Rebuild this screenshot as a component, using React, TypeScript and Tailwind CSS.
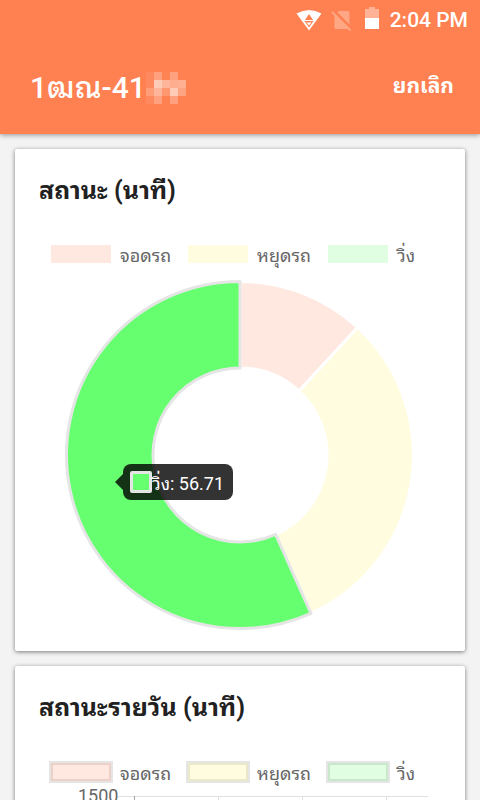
import React from "react";

const THAI = "font-['Roboto','Noto_Sans_Thai_Looped','Loma','Garuda','Waree','Noto_Sans',sans-serif]";

type Slice = { label: string; value: number; fill: string; active?: boolean };

const slices: Slice[] = [
  { label: "จอดรถ", value: 11.86, fill: "#ffe8e0" },
  { label: "หยุดรถ", value: 31.43, fill: "#fffce0" },
  { label: "วิ่ง", value: 56.71, fill: "#66ff70", active: true },
];

function ringPath(from: number, to: number, outer: number, inner: number) {
  const at = (share: number, r: number) => {
    const a = (share / 100) * Math.PI * 2;
    return `${(r * Math.sin(a)).toFixed(2)} ${(-r * Math.cos(a)).toFixed(2)}`;
  };
  const large = to - from > 50 ? 1 : 0;
  return `M${at(from, outer)}A${outer} ${outer} 0 ${large} 1 ${at(to, outer)}L${at(to, inner)}A${inner} ${inner} 0 ${large} 0 ${at(from, inner)}Z`;
}

function Donut() {
  let start = 0;
  return (
    <svg viewBox="-176 -176 352 352" className="block w-full" role="img" aria-label="สถานะ (นาที)">
      {slices.map((s) => {
        const from = start;
        start += s.value;
        return (
          <path
            key={s.label}
            d={ringPath(from, start, 173.5, 87)}
            fill={s.fill}
            stroke={s.active ? "#e5e5e5" : "#ffffff"}
            strokeWidth="3"
            strokeLinejoin="round"
          />
        );
      })}
    </svg>
  );
}

const plain = ["bg-[#ffe8e0]", "bg-[#fffce0]", "bg-[#e0ffe2]"];
const framed = [
  "bg-[#ffe8e0] border-[#edd1c9] outline-[#e5e5e5]",
  "bg-[#fffce0] border-[#ebe8c9] outline-[#e5e5e5]",
  "bg-[#e0ffe2] border-[#c9e8cb] outline-[#e5e5e5]",
];

function Legend({ bordered = false }: { bordered?: boolean }) {
  return (
    <ul className="ml-3 flex h-6 items-center gap-[17px] text-lg leading-6 text-[#666666]">
      {slices.map((s, i) => (
        <li key={s.label} className="flex items-center gap-[9px] whitespace-nowrap">
          <span
            className={
              bordered
                ? `h-[18px] w-[60px] border-2 outline-2 ${framed[i]}`
                : `h-[18px] w-[60px] ${plain[i]}`
            }
          />
          <span className="pt-[3px]">{s.label}</span>
        </li>
      ))}
    </ul>
  );
}

function StatusBar() {
  return (
    <div className="flex h-10 items-center justify-end pr-3 text-white">
      <svg viewBox="0 0 28 24" className="mr-2 h-6 w-7" fill="currentColor" aria-hidden="true">
        <path d="M1.500 5.500Q14-1.500 26.500 5.500L14 22.500Z" />
        <path d="M14 6l4 6h-8zM9.500 13h9L14 19.500z" fill="#ff8050" />
        <path d="M11.500 14.500h5L14 17.500z" />
      </svg>
      <svg viewBox="0 0 22 24" className="mr-3 h-6 w-[22px]" aria-hidden="true">
        <path d="M8 3h9q1.500 0 1.500 1.500v15q0 1.500-1.500 1.500H5q-1.500 0-1.500-1.500V7z" fill="#ffa685" />
        <path d="M2 2l19 19" stroke="#ff8050" strokeWidth="3" />
        <path d="M1 4l18.500 18.500" stroke="#ffa685" strokeWidth="2" />
      </svg>
      <svg viewBox="0 0 14 22" className="mr-[11px] mb-1 h-[22px] w-[14px]" aria-hidden="true">
        <path d="M0 2h4V0h6v2h4v9H0z" fill="#ffb296" />
        <path d="M0 11h14v11H0z" fill="#ffffff" />
      </svg>
      <span className="text-[21px] leading-6 font-medium">2:04 PM</span>
    </div>
  );
}

const mosaic = [
  "bg-[#ff895e]", "bg-[#ffa17e]", "bg-[#ff8454]", "bg-[#ffa17e]", "bg-[#ff8050]",
  "bg-[#ff895e]", "bg-[#ffcbb7]", "bg-[#ffb599]", "bg-[#ffad8f]", "bg-[#ffb093]",
  "bg-[#ff9d79]", "bg-[#ffb599]", "bg-[#ff9870]", "bg-[#ffcbb7]", "bg-[#ffa482]",
  "bg-[#ff895e]", "bg-[#ffa17e]", "bg-[#ff8050]", "bg-[#ffa17e]", "bg-[#ff8050]",
];

export default function App() {
  return (
    <div className={`flex h-screen flex-col overflow-hidden bg-[#f3f3f3] ${THAI}`}>
      <header className="z-10 shrink-0 bg-[#ff8050] pb-[22px] shadow-[0_1px_5px_rgba(0,0,0,0.4)]">
        <StatusBar />
        <div className="flex h-[72px] items-center justify-between pt-6 pr-[26px] pl-[30px] text-white">
          <div className="flex items-center">
            <h1 className="text-[30px] leading-10 font-medium">1ฒณ-41</h1>
            <div className="grid grid-cols-5" aria-hidden="true">
              {mosaic.map((c, i) => (
                <span key={i} className={`size-2 ${c}`} />
              ))}
            </div>
          </div>
          <button type="button" className="pb-1 text-[21px] leading-8 font-bold">
            ยกเลิก
          </button>
        </div>
      </header>
      <main className="flex flex-col gap-[15px] p-[15px]">
        <section className="shrink-0 rounded-xs bg-white px-6 pt-6 pb-5 shadow-[0_1px_4px_rgba(0,0,0,0.5)]">
          <h2 className="text-[25px] leading-9 font-bold text-[#212121]">สถานะ (นาที)</h2>
          <div className="pt-[33px]">
            <Legend />
          </div>
          <div className="relative mx-auto mt-[13px] w-[352px] max-w-full">
            <Donut />
            <div className="absolute top-[185px] left-[59px] flex h-9 items-center rounded-lg bg-black/80 pr-[9px] pl-[7px] text-lg leading-6 whitespace-nowrap text-white">
              <span className="absolute top-[10px] -left-2 border-y-8 border-r-8 border-y-transparent border-r-black/80" />
              <span className="size-[22px] rounded-[2px] border-3 border-[#e5e5e5] bg-[#66ff70]" />
              <span className="pt-[3px]">วิ่ง: 56.71</span>
            </div>
          </div>
        </section>
        <section className="shrink-0 rounded-xs bg-white px-6 pt-6 pb-6 shadow-[0_1px_4px_rgba(0,0,0,0.5)]">
          <h2 className="text-[25px] leading-9 font-bold text-[#212121]">สถานะรายวัน (นาที)</h2>
          <div className="pt-[34px]">
            <Legend bordered />
          </div>
          <div className="flex h-60 pr-[13px] pl-[39px] text-lg leading-6 text-[#666666]">
            <span>1500</span>
            <svg className="mt-3 h-48 w-[310px] min-w-0" aria-hidden="true">
              <path d="M0 .5H310M100.500 0V192M184.500 0V192M268.500 0V192" stroke="#e0e0e0" />
              <path d="M16.500 0V192" stroke="#a6a6a6" />
            </svg>
          </div>
        </section>
      </main>
    </div>
  );
}
